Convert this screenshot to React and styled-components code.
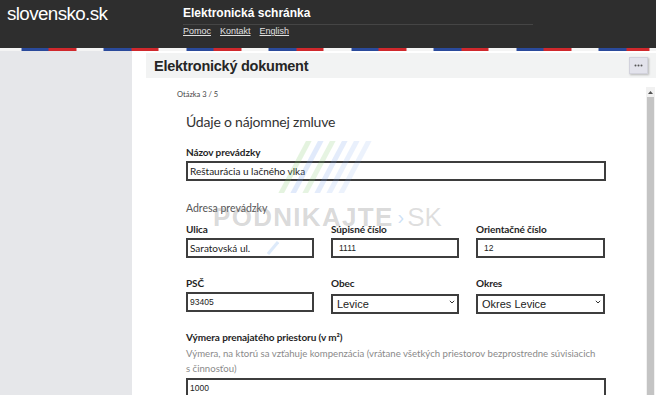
import React from "react";
import styled, { createGlobalStyle } from "styled-components";

const GlobalStyle = createGlobalStyle`
  html, body {
    margin: 0;
    padding: 0;
    overflow: hidden;
    background: #ffffff;
  }
  * { box-sizing: border-box; }
`;

const Page = styled.div`
  width: 656px;
  height: 395px;
  display: flex;
  flex-direction: column;
  font-family: "Lato", "Liberation Sans", sans-serif;
  color: #2b2b2b;
`;

const Header = styled.header`
  height: 48px;
  background: #2e2e2e;
  display: flex;
  flex-shrink: 0;
`;

const Logo = styled.div`
  width: 183px;
  padding: 3px 0 0 7px;
  font-family: "Liberation Sans", Arial, sans-serif;
  font-size: 18.8px;
  color: #ffffff;
  letter-spacing: -0.6px;
`;

const HeaderNav = styled.div`
  width: 350px;
  display: flex;
  flex-direction: column;
  padding-top: 6px;
`;

const AppName = styled.div`
  font-family: "Liberation Sans", Arial, sans-serif;
  font-weight: bold;
  font-size: 12px;
  color: #ffffff;
  padding-bottom: 4px;
  border-bottom: 1px solid #454545;
`;

const Links = styled.div`
  display: flex;
  gap: 9px;
  padding-top: 1px;
`;

const HeaderLink = styled.a`
  font-family: "Liberation Sans", Arial, sans-serif;
  font-size: 9px;
  color: #e0e0e0;
  text-decoration: underline;
`;

const Stripe = styled.div`
  height: 3px;
  flex-shrink: 0;
  background: repeating-linear-gradient(
    90deg,
    #f4f4f4 0 27.5px,
    #2a4a9b 27.5px 55px,
    #d0282c 55px 82.5px
  );
  background-position: -6.5px 0;
`;

const Body = styled.div`
  flex: 1;
  display: flex;
  min-height: 0;
`;

const Sidebar = styled.aside`
  width: 132px;
  background: #e6e7ea;
  flex-shrink: 0;
`;

const Main = styled.main`
  flex: 1;
  display: flex;
  flex-direction: column;
  padding: 2px 0 0 14px;
  background: #ffffff;
  position: relative;
  min-width: 0;
`;

const TitleBar = styled.div`
  height: 25px;
  background: #f2f3f3;
  display: flex;
  align-items: center;
  justify-content: space-between;
  padding: 0 8px 0 8px;
  flex-shrink: 0;
`;

const Title = styled.h1`
  margin: 0;
  font-family: "Liberation Sans", Arial, sans-serif;
  font-weight: bold;
  font-size: 14.5px;
  letter-spacing: -0.25px;
  color: #262626;
`;

const MenuButton = styled.button`
  width: 19px;
  height: 17px;
  padding: 0;
  border: 1px solid #d2d2dc;
  background: #e3e3ec;
  box-shadow: 1px 1px 2px rgba(0, 0, 0, 0.25);
  display: flex;
  align-items: center;
  justify-content: center;
`;

const Content = styled.div`
  flex: 1;
  display: flex;
  margin-top: 9px;
  min-height: 0;
`;

const FormArea = styled.div`
  flex: 1;
  padding: 2px 0 0 31px;
  overflow: hidden;
`;

const Scrollbar = styled.div`
  width: 9px;
  margin-right: 1px;
  background: #f1f1f1;
  display: flex;
  flex-direction: column;
  align-items: center;
`;

const ScrollArrow = styled.div`
  height: 10px;
  display: flex;
  align-items: center;
  justify-content: center;
`;

const ScrollThumb = styled.div`
  flex: 1;
  width: 7px;
  background: #c4c4c4;
`;

const Step = styled.div`
  font-size: 7.5px;
  color: #444;
  line-height: 12px;
`;

const Form = styled.div`
  width: 420px;
  margin-left: 9px;
`;

const Heading = styled.h2`
  margin: 11px 0 0;
  font-weight: normal;
  font-size: 14px;
  letter-spacing: -0.2px;
  line-height: 20px;
  color: #333;
`;

const Field = styled.div`
  margin-top: ${(p) => p.$top || 0}px;
  display: flex;
  flex-direction: column;
`;

const Label = styled.label`
  font-weight: bold;
  font-size: 10px;
  letter-spacing: -0.1px;
  line-height: 14px;
  color: #1f1f1f;
  margin-bottom: 2px;
`;

const Hint = styled.div`
  font-size: 9.6px;
  line-height: 15px;
  color: #8a8a8a;
  margin-bottom: 2px;
`;

const Section = styled.div`
  margin-top: 20px;
  font-size: 10.5px;
  line-height: 14px;
  color: #555;
`;

const Row = styled.div`
  display: grid;
  grid-template-columns: 128px 128px 129px;
  column-gap: 17px;
  margin-top: ${(p) => p.$top || 0}px;
`;

const Input = styled.input`
  width: 100%;
  height: 20px;
  border: 2px solid #3d3d3d;
  padding: 0 0 0 ${(p) => p.$pad || 2}px;
  font-family: ${(p) =>
    p.$num ? '"Liberation Sans", Arial, sans-serif' : '"Lato", sans-serif'};
  font-size: ${(p) => (p.$num ? 8.5 : 10)}px;
  color: #222;
  background: #fff;
  outline: none;
`;

const SelectWrap = styled.div`
  position: relative;
  height: 20px;
`;

const Select = styled.select`
  width: 100%;
  height: 20px;
  border: 2px solid #3d3d3d;
  padding: 0 0 0 4px;
  appearance: none;
  font-family: "Liberation Sans", Arial, sans-serif;
  font-size: 11px;
  color: #222;
  background: #fff;
  outline: none;
`;

const Chevron = styled.svg`
  position: absolute;
  right: 4px;
  top: 8px;
  pointer-events: none;
`;

const Watermark = styled.div`
  position: absolute;
  left: 81px;
  top: 90px;
  width: 240px;
  height: 170px;
  pointer-events: none;
`;

const Brand = styled.div`
  position: absolute;
  left: 0;
  top: 63px;
  display: flex;
  align-items: center;
  font-family: "Liberation Sans", Arial, sans-serif;
  font-size: 26px;
  line-height: 26px;
  white-space: nowrap;
`;

const BrandBold = styled.span`
  font-weight: bold;
  color: rgba(130, 130, 130, 0.3);
  letter-spacing: 1.3px;
`;

const BrandChevron = styled.span`
  color: rgba(110, 165, 230, 0.35);
  font-size: 20px;
  margin: 0 3px 0 4px;
`;

const BrandLight = styled.span`
  color: rgba(140, 140, 140, 0.28);
  font-weight: normal;
`;

const Stripes = styled.svg`
  position: absolute;
  left: 64px;
  top: 0;
`;

const Slash = styled.svg`
  position: absolute;
  left: 54px;
  top: 100px;
`;

const SelectField = ({ value }) => (
  <SelectWrap>
    <Select defaultValue={value}>
      <option>{value}</option>
    </Select>
    <Chevron width="6" height="4" viewBox="0 0 6 4">
      <path d="M0.8 0.8 L3 3 L5.2 0.8" fill="none" stroke="#333" strokeWidth="1" />
    </Chevron>
  </SelectWrap>
);

export default function App() {
  return (
    <>
      <GlobalStyle />
      <Page>
        <Header>
          <Logo>slovensko.sk</Logo>
          <HeaderNav>
            <AppName>Elektronická schránka</AppName>
            <Links>
              <HeaderLink href="#">Pomoc</HeaderLink>
              <HeaderLink href="#">Kontakt</HeaderLink>
              <HeaderLink href="#">English</HeaderLink>
            </Links>
          </HeaderNav>
        </Header>
        <Stripe />
        <Body>
          <Sidebar />
          <Main>
            <TitleBar>
              <Title>Elektronický dokument</Title>
              <MenuButton aria-label="Menu">
                <svg width="9" height="3" viewBox="0 0 9 3">
                  <circle cx="1.5" cy="1.5" r="1" fill="#555" />
                  <circle cx="4.5" cy="1.5" r="1" fill="#555" />
                  <circle cx="7.5" cy="1.5" r="1" fill="#555" />
                </svg>
              </MenuButton>
            </TitleBar>
            <Content>
              <FormArea>
                <Step>Otázka 3 / 5</Step>
                <Form>
                  <Heading>Údaje o nájomnej zmluve</Heading>
                  <Field $top={13}>
                    <Label>Názov prevádzky</Label>
                    <Input defaultValue="Reštaurácia u lačného vlka" />
                  </Field>
                  <Section>Adresa prevádzky</Section>
                  <Row $top={7}>
                    <Field>
                      <Label>Ulica</Label>
                      <Input defaultValue="Saratovská ul." />
                    </Field>
                    <Field>
                      <Label>Súpisné číslo</Label>
                      <Input $num $pad={6} defaultValue="1111" />
                    </Field>
                    <Field>
                      <Label>Orientačné číslo</Label>
                      <Input $num $pad={6} defaultValue="12" />
                    </Field>
                  </Row>
                  <Row $top={18}>
                    <Field>
                      <Label>PSČ</Label>
                      <Input $num defaultValue="93405" />
                    </Field>
                    <Field>
                      <Label>Obec</Label>
                      <SelectField value="Levice" />
                    </Field>
                    <Field>
                      <Label>Okres</Label>
                      <SelectField value="Okres Levice" />
                    </Field>
                  </Row>
                  <Field $top={18}>
                    <Label>Výmera prenajatého priestoru (v m²)</Label>
                    <Hint>
                      Výmera, na ktorú sa vzťahuje kompenzácia (vrátane všetkých
                      priestorov bezprostredne súvisiacich
                      <br />s činnosťou)
                    </Hint>
                    <Input $num defaultValue="1000" />
                  </Field>
                </Form>
              </FormArea>
              <Scrollbar>
                <ScrollArrow>
                  <svg width="5" height="3" viewBox="0 0 5 3">
                    <path d="M0 3 L2.5 0 L5 3 Z" fill="#505050" />
                  </svg>
                </ScrollArrow>
                <ScrollThumb />
              </Scrollbar>
            </Content>
            <Watermark>
              <Stripes width="104" height="52" viewBox="0 0 104 52">
                <defs>
                  <clipPath id="wm-clip">
                    <polygon points="26,0 104,0 78,52 0,52" />
                  </clipPath>
                </defs>
                <g clipPath="url(#wm-clip)" strokeWidth="5">
                  <line x1="0" y1="60" x2="36" y2="-8" stroke="rgba(130,200,110,0.22)" />
                  <line x1="12" y1="60" x2="48" y2="-8" stroke="rgba(120,160,235,0.22)" />
                  <line x1="24" y1="60" x2="60" y2="-8" stroke="rgba(130,200,110,0.2)" />
                  <line x1="36" y1="60" x2="72" y2="-8" stroke="rgba(120,160,235,0.2)" />
                  <line x1="48" y1="60" x2="84" y2="-8" stroke="rgba(120,160,235,0.16)" />
                  <line x1="60" y1="60" x2="96" y2="-8" stroke="rgba(120,160,235,0.14)" />
                </g>
              </Stripes>
              <Slash width="12" height="14" viewBox="0 0 12 14">
                <line x1="1" y1="13" x2="11" y2="1" stroke="rgba(120,170,235,0.25)" strokeWidth="3" />
              </Slash>
              <Brand>
                <BrandBold>PODNIKAJTE</BrandBold>
                <BrandChevron>›</BrandChevron>
                <BrandLight>SK</BrandLight>
              </Brand>
            </Watermark>
          </Main>
        </Body>
      </Page>
    </>
  );
}
